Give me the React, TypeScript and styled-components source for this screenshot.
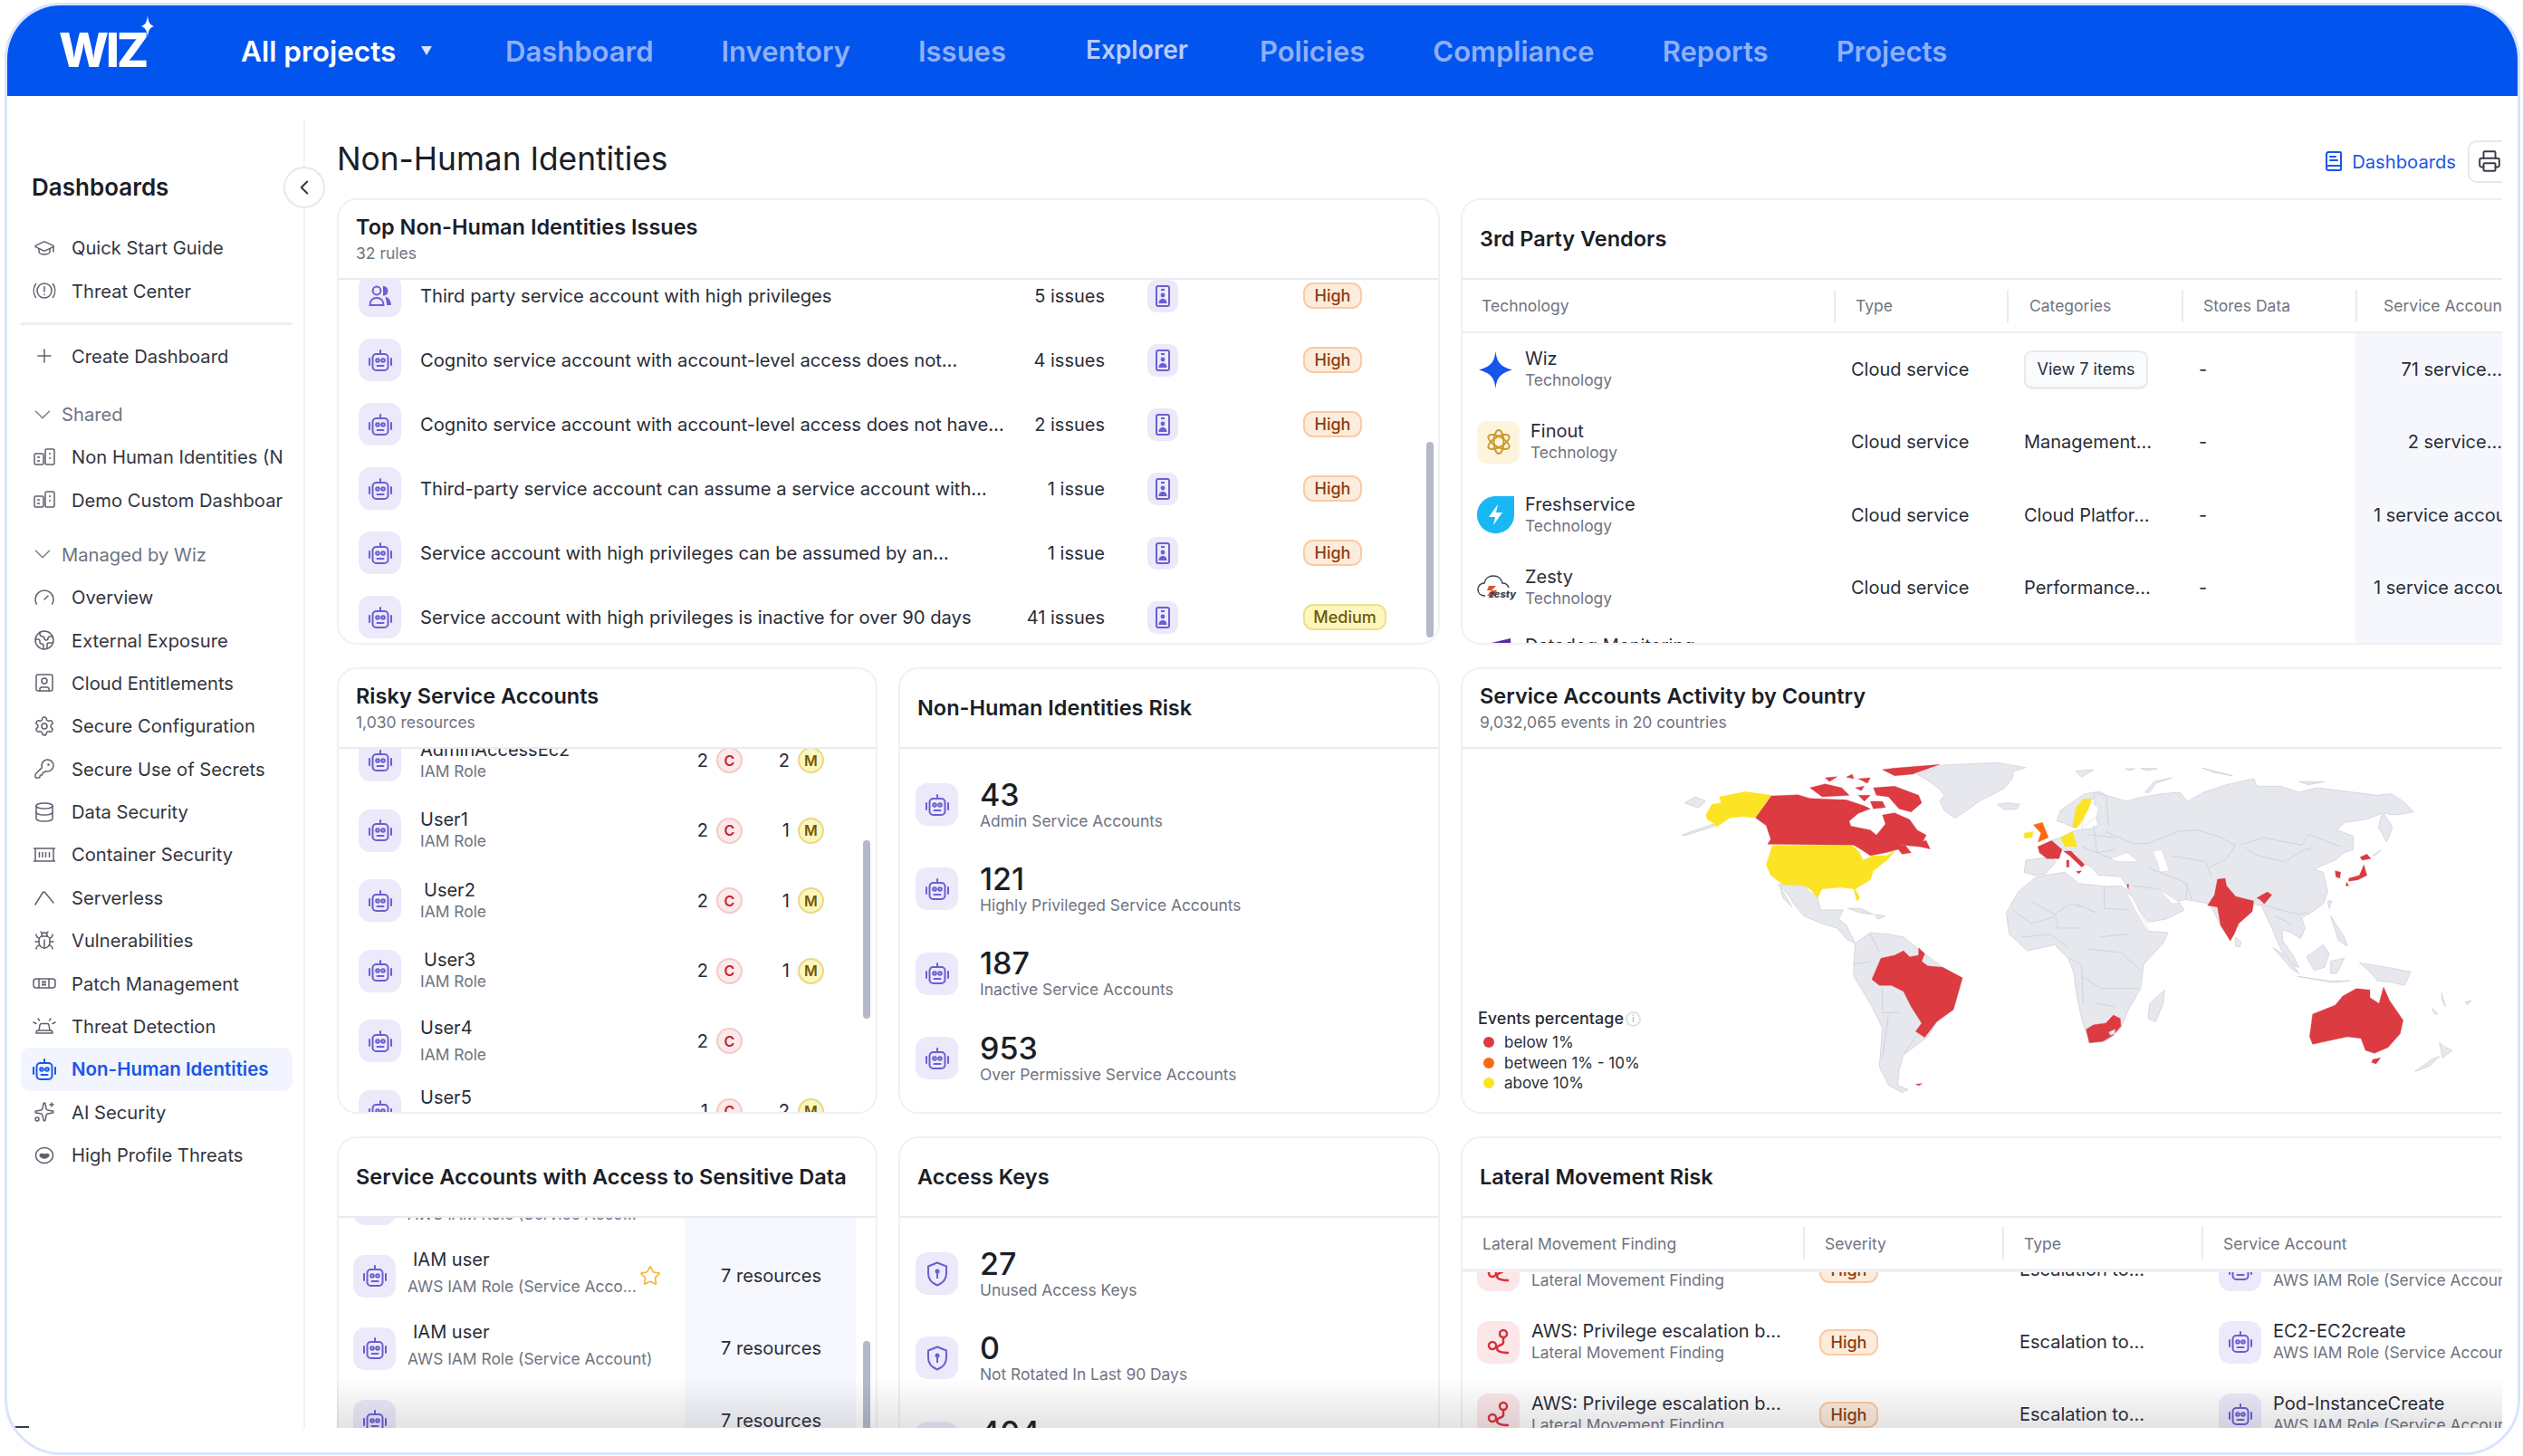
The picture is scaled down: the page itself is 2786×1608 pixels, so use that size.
import styled, { createGlobalStyle } from "styled-components";
import {
  BookText,
  Bug,
  ChevronDown,
  ChevronLeft,
  Database,
  Earth,
  Gauge,
  GraduationCap,
  KeyRound,
  Plus,
  Printer,
  Settings,
  Sparkles,
  SquareUser,
  Star,
} from "lucide-react";
import type { ReactNode } from "react";

const GlobalStyle = createGlobalStyle`
  html, body {
    margin: 0;
    background: #fff;
    font-family: Inter, "Noto Sans", sans-serif;
    color: #2a2d37;
  }
  * { box-sizing: border-box; }
`;

const Frame = styled.div`
  position: relative;
  width: 2778px;
  height: 1604px;
  margin: 3px 3px 0 5px;
  border: 3px solid #d9e4fc;
  border-radius: 62px;
  overflow: hidden;
  background: #fff;
`;

const Nav = styled.header`
  height: 100px;
  background: #0254ee;
  display: flex;
  align-items: center;
  padding-left: 57px;
`;

const Logo = styled.div`
  position: relative;
  width: 201px;
  font-size: 52px;
  font-weight: 800;
  letter-spacing: -3px;
  color: #fff;
  line-height: 1;
  & svg {
    position: absolute;
    left: 91px;
    top: -13px;
  }
`;

const ProjectPicker = styled.div`
  display: flex;
  align-items: center;
  width: 292px;
  font-size: 31.5px;
  font-weight: 600;
  color: #fff;
  & i {
    width: 0;
    height: 0;
    margin-left: 28px;
    border-left: 6px solid transparent;
    border-right: 6px solid transparent;
    border-top: 10px solid #d8e3fc;
  }
`;

const NavLinks = styled.nav`
  display: flex;
  align-items: center;
  gap: 75px;
  padding-top: 1px;
`;

const NavLink = styled.span<{ $current?: boolean }>`
  font-size: ${(p) => (p.$current ? 28 : 31)}px;
  font-weight: 600;
  color: ${(p) => (p.$current ? "#b9cdfb" : "#8fb0f8")};
  margin: ${(p) => (p.$current ? "-4px 4px 0 13px" : "0")};
`;

const Body = styled.div`
  display: flex;
  height: 1471px;
  padding-top: 26px;
`;

const Sidebar = styled.aside`
  position: relative;
  flex: none;
  width: 329px;
  border-right: 2px solid #f1f2f5;
  padding: 58px 0 0 15px;
`;

const SideTitle = styled.h2`
  margin: 0 0 26px 12px;
  font-size: 26px;
  line-height: 34px;
  font-weight: 600;
  color: #1b1e27;
`;

const CollapseButton = styled.button`
  position: absolute;
  right: -24px;
  top: 52px;
  width: 46px;
  height: 46px;
  border-radius: 50%;
  border: 2px solid #e6e8ec;
  background: #fff;
  display: flex;
  align-items: center;
  justify-content: center;
  padding: 0;
  color: #33363f;
  z-index: 2;
`;

const SideRule = styled.div`
  width: 300px;
  height: 3px;
  margin: 11px 0;
  background: #eceef2;
`;

const SideItem = styled.div<{ $active?: boolean }>`
  display: flex;
  align-items: center;
  width: 300px;
  height: 47.4px;
  padding-left: 13px;
  gap: 17px;
  border-radius: 10px;
  font-size: ${(p) => (p.$active ? 20.5 : 20.2)}px;
  font-weight: ${(p) => (p.$active ? 600 : 400)};
  white-space: nowrap;
  color: ${(p) => (p.$active ? "#1a56e8" : "#33363f")};
  background: ${(p) => (p.$active ? "#f2f5fd" : "transparent")};
  & > svg {
    flex: none;
    width: 26px;
    height: 24px;
    color: ${(p) => (p.$active ? "#1a56e8" : "#5d616d")};
  }
`;

const SideLabel = styled.span`
  width: 233px;
  overflow: hidden;
`;

const SideGroup = styled.div<{ $gap: number }>`
  display: flex;
  align-items: center;
  height: 47px;
  margin-top: ${(p) => p.$gap}px;
  padding-left: 9px;
  gap: 6px;
  font-size: 20.2px;
  color: #6f7480;
  & > svg {
    width: 30px;
    height: 30px;
    color: #7a7f8b;
  }
`;

const StrayMark = styled.i`
  position: absolute;
  left: 7px;
  bottom: 0;
  width: 17px;
  height: 2px;
  background: #3a3d46;
`;

const Main = styled.main`
  position: relative;
  flex: none;
  width: 2426px;
  height: 1445px;
  padding-left: 35px;
  overflow: hidden;
`;

const PageHeader = styled.div`
  display: flex;
  justify-content: space-between;
  align-items: center;
  height: 87px;
`;

const PageTitle = styled.h1`
  margin: 0;
  font-size: 35.3px;
  font-weight: 400;
  color: #1b1e27;
`;

const PageActions = styled.div`
  display: flex;
  align-items: center;
  gap: 13px;
  margin: 5px -9px 0 0;
  font-size: 20.2px;
  color: #1a56e8;
`;

const DashboardsLink = styled.span`
  display: flex;
  align-items: center;
  gap: 8px;
`;

const PrintButton = styled.button`
  width: 47px;
  height: 47px;
  border: 2px solid #e6e8ec;
  border-radius: 10px;
  background: #fff;
  display: flex;
  align-items: center;
  justify-content: center;
  padding: 0;
  color: #3a3d46;
`;

const Grid = styled.div`
  display: grid;
  grid-template-columns: 597px 598px 1180px;
  grid-template-rows: 493px 493px 400px;
  column-gap: 23px;
  row-gap: 25px;
`;

const Card = styled.section<{ $wide?: boolean }>`
  grid-column: ${(p) => (p.$wide ? "span 2" : "auto")};
  display: flex;
  flex-direction: column;
  border: 2px solid #f0f1f5;
  border-radius: 22px;
  background: #fff;
  overflow: hidden;
  min-width: 0;
`;

const CardHead = styled.div`
  flex: none;
  height: 88px;
  padding-left: 19px;
  display: flex;
  flex-direction: column;
  justify-content: center;
  gap: 2px;
  padding-bottom: 1px;
  border-bottom: 2px solid #e9ebf0;
`;

const CardTitle = styled.h3`
  margin: 0;
  font-size: 23.5px;
  line-height: 30px;
  font-weight: 600;
  color: #1b1e27;
`;

const CardSub = styled.div`
  font-size: 17.5px;
  line-height: 24px;
  color: #70747f;
`;

const CardBody = styled.div`
  position: relative;
  flex: 1;
  overflow: hidden;
`;

const Scrollbar = styled.i<{ $top: number; $height: number; $right: number }>`
  position: absolute;
  top: ${(p) => p.$top}px;
  right: ${(p) => p.$right}px;
  width: 8px;
  height: ${(p) => p.$height}px;
  border-radius: 4px;
  background: #b4b8c8;
`;

const Tile = styled.span<{ $red?: boolean }>`
  flex: none;
  width: 47px;
  height: 47px;
  border-radius: 13px;
  display: flex;
  align-items: center;
  justify-content: center;
  background: ${(p) => (p.$red ? "#fbe6e8" : "#ece9fb")};
  color: ${(p) => (p.$red ? "#d8323c" : "#6a5fd0")};
`;

const SmallTile = styled.span`
  flex: none;
  width: 34px;
  height: 36px;
  border-radius: 10px;
  display: flex;
  align-items: center;
  justify-content: center;
  background: #ece9fb;
  color: #6a5fd0;
`;

const Badge = styled.span<{ $medium?: boolean }>`
  flex: none;
  display: inline-flex;
  align-items: center;
  justify-content: center;
  width: ${(p) => (p.$medium ? 92 : 65)}px;
  height: 29px;
  border-radius: 11px;
  font-size: 18px;
  font-weight: 500;
  border: 2px solid ${(p) => (p.$medium ? "#ece08f" : "#f8cba5")};
  background: ${(p) => (p.$medium ? "#fdf7bd" : "#fdecdb")};
  color: ${(p) => (p.$medium ? "#6b5a10" : "#8a3d12")};
`;

const IssueList = styled.div`
  margin-top: -18px;
`;

const IssueRow = styled.div`
  display: flex;
  align-items: center;
  height: 71px;
  padding-left: 22px;
`;

const IssueName = styled.div`
  flex: none;
  width: 650px;
  margin-left: 21px;
  font-size: 20.2px;
  white-space: nowrap;
`;

const IssueCount = styled.div`
  flex: none;
  width: 106px;
  font-size: 20px;
  text-align: right;
  margin-right: 47px;
  white-space: nowrap;
`;

const IssueTag = styled.div`
  margin-left: 138px;
`;

const Table = styled.div`
  flex: 1;
  min-height: 0;
  display: flex;
  flex-direction: column;
  overflow: hidden;
`;

const TableHead = styled.div<{ $cols: string; $height: number; $strong?: boolean }>`
  flex: none;
  display: grid;
  grid-template-columns: ${(p) => p.$cols};
  align-items: center;
  height: ${(p) => p.$height}px;
  border-bottom: ${(p) => (p.$strong ? "4px solid #eef0f4" : "2px solid #eceef2")};
  background: #fff;
  position: relative;
  z-index: 1;
`;

const HeadCell = styled.div<{ $pad: number }>`
  height: 36px;
  display: flex;
  align-items: center;
  padding-left: ${(p) => p.$pad}px;
  font-size: 17.5px;
  color: #70747f;
  white-space: nowrap;
  overflow: hidden;
  &:not(:first-child) {
    border-left: 2px solid #e9ebf0;
  }
`;

const VendorRows = styled.div`
  flex: 1;
  background: linear-gradient(to right, transparent 986px, #f5f7fc 986px);
  & > div:last-child {
    margin-top: -4px;
  }
`;

const DataRow = styled.div<{ $cols: string; $height: number }>`
  display: grid;
  grid-template-columns: ${(p) => p.$cols};
  height: ${(p) => p.$height}px;
  align-items: center;
  font-size: 20px;
  white-space: nowrap;
`;

const Cell = styled.div<{ $pad: number }>`
  padding-left: ${(p) => p.$pad}px;
  display: flex;
  align-items: center;
  min-width: 0;
`;

const AccountCell = styled.div<{ $start?: boolean }>`
  width: 162px;
  display: flex;
  justify-content: ${(p) => (p.$start ? "flex-start" : "flex-end")};
  padding-left: ${(p) => (p.$start ? 20 : 0)}px;
  overflow: hidden;
`;

const NameStack = styled.div<{ $indent?: number; $ml?: number; $gap?: number }>`
  display: flex;
  flex-direction: column;
  min-width: 0;
  margin-left: ${(p) => p.$ml ?? 0}px;
  gap: ${(p) => p.$gap ?? 0}px;
  line-height: 24px;
  white-space: nowrap;
  & b {
    font-weight: 400;
    font-size: 20px;
    min-height: 24px;
    color: #2a2d37;
    padding-left: ${(p) => p.$indent ?? 0}px;
  }
  & small {
    font-size: 17.4px;
    min-height: 24px;
    color: #70747f;
  }
`;

const LogoSlot = styled.span<{ $w: number }>`
  flex: none;
  width: ${(p) => p.$w}px;
  margin-right: 12px;
  display: flex;
  align-items: center;
  justify-content: center;
`;

const FinoutMark = styled.span`
  width: 47px;
  height: 47px;
  border-radius: 10px;
  background: #fdf4de;
  display: flex;
  align-items: center;
  justify-content: center;
`;

const ZestyMark = styled.span`
  position: relative;
  width: 41px;
  height: 30px;
  & em {
    position: absolute;
    right: -2px;
    bottom: 2px;
    font-size: 11px;
    font-style: italic;
    font-weight: 800;
    line-height: 1;
    color: #3b4150;
  }
`;

const ViewButton = styled.button`
  width: 137px;
  height: 43px;
  border: 2px solid #e8eaee;
  border-bottom-width: 3px;
  border-radius: 9px;
  background: #fafbfc;
  font: inherit;
  font-size: 18px;
  color: #2a2d37;
`;

const RiskList = styled.div`
  margin-top: -26px;
`;

const RiskRow = styled.div`
  display: flex;
  align-items: center;
  height: 77.5px;
  padding-left: 22px;
`;

const RiskName = styled.div`
  flex: none;
  width: 265px;
  margin-left: 21px;
`;

const CountPair = styled.div<{ $second?: boolean }>`
  flex: none;
  width: ${(p) => (p.$second ? 90 : 91)}px;
  display: flex;
  align-items: center;
  justify-content: flex-end;
  gap: 9px;
  font-size: 20px;
`;

const Dot = styled.span<{ $m?: boolean }>`
  width: 29px;
  height: 29px;
  border-radius: 50%;
  display: flex;
  align-items: center;
  justify-content: center;
  font-size: 16px;
  font-weight: 600;
  border: 2px solid ${(p) => (p.$m ? "#e8d98a" : "#f6c9c9")};
  background: ${(p) => (p.$m ? "#fdf6b9" : "#fce9e9")};
  color: ${(p) => (p.$m ? "#6b5a10" : "#c0272d")};
`;

const StatList = styled.div`
  padding: 15px 0 0 17px;
`;

const StatRow = styled.div`
  display: flex;
  align-items: center;
  height: 93.3px;
  gap: 24px;
`;

const StatText = styled.div`
  & strong {
    display: block;
    font-size: 34px;
    line-height: 38px;
    font-weight: 500;
    color: #1b1e27;
  }
  & span {
    display: block;
    margin-top: -2px;
    font-size: 17.4px;
    line-height: 24px;
    color: #70747f;
  }
`;

const MapArea = styled.div`
  position: relative;
  height: 100%;
  padding: 8px 0 0 237px;
`;

const Legend = styled.div`
  position: absolute;
  left: 17px;
  top: 287px;
  font-size: 17px;
  line-height: 22px;
  color: #2a2d37;
`;

const LegendTitle = styled.div`
  display: flex;
  align-items: center;
  gap: 2px;
  margin-bottom: 4px;
  font-size: 18px;
  font-weight: 500;
`;

const LegendInfo = styled.i`
  width: 17px;
  height: 17px;
  border-radius: 50%;
  border: 2px solid #dfe1e7;
  font-size: 11px;
  font-style: normal;
  line-height: 13px;
  text-align: center;
  color: #b4b8c2;
`;

const LegendRow = styled.div<{ $color: string }>`
  display: flex;
  align-items: center;
  gap: 11px;
  height: 22.5px;
  padding-left: 6px;
  &::before {
    content: "";
    width: 12px;
    height: 12px;
    border-radius: 50%;
    background: ${(p) => p.$color};
  }
`;

const SensitiveList = styled.div`
  margin-top: -56px;
  background: linear-gradient(
    to right,
    transparent 382px,
    #f6f8fd 382px,
    #f6f8fd 571px,
    transparent 571px
  );
`;

const SensitiveRow = styled.div`
  display: flex;
  align-items: center;
  height: 80px;
  padding-left: 16px;
`;

const SensitiveName = styled.div`
  flex: none;
  width: 256px;
  margin-left: 13px;
  margin-top: -6px;
`;

const StarSlot = styled.span`
  flex: none;
  width: 24px;
  display: flex;
  color: #f5b942;
`;

const Resources = styled.span`
  margin-left: 66px;
  font-size: 20px;
`;

const LateralRows = styled.div`
  margin-top: -43px;
`;

const BottomFade = styled.div`
  position: absolute;
  left: 35px;
  right: 0;
  bottom: 0;
  height: 56px;
  background: linear-gradient(to bottom, rgba(40, 40, 50, 0), rgba(40, 40, 50, 0.13));
  pointer-events: none;
  z-index: 3;
`;

const RobotIcon = () => (
  <svg width="26" height="24" viewBox="0 0 26 24" fill="none" stroke="currentColor" strokeWidth="2" strokeLinecap="round">
    <path d="M13 1v4" />
    <rect x="4.5" y="5" width="17" height="18" rx="4" />
    <circle cx="10" cy="12" r="1.8" />
    <circle cx="16" cy="12" r="1.8" />
    <path d="M9.5 18h7" />
    <path d="M1 10v7M25 10v7" />
  </svg>
);

const PeopleIcon = () => (
  <svg width="26" height="24" viewBox="0 0 26 24" fill="none" stroke="currentColor" strokeWidth="2">
    <circle cx="9" cy="6" r="4.4" />
    <path d="M17 2a4.3 4.3 0 0 1 0 8.4z" fill="currentColor" />
    <path d="M1.5 22c0-5 3-8 7.5-8s7.5 3 7.5 8z" />
    <path d="M18.5 13c4 .6 6 4 6.5 9h-5c0-3-.7-6-1.5-9z" fill="currentColor" stroke="none" />
  </svg>
);

const BadgeIcon = () => (
  <svg width="16" height="24" viewBox="0 0 16 24" fill="none" stroke="currentColor" strokeWidth="2">
    <rect x="1" y="1" width="14" height="22" rx="2" />
    <path d="M6 5h4" />
    <circle cx="8" cy="11" r="2.4" fill="currentColor" stroke="none" />
    <path d="M3.5 20c0-3.5 2-5 4.500-5s4.500 1.500 4.500 5z" fill="currentColor" stroke="none" />
  </svg>
);

const ShieldIcon = () => (
  <svg width="24" height="28" viewBox="0 0 24 28" fill="none" stroke="currentColor" strokeWidth="2" strokeLinejoin="round">
    <path d="M12 1.500 22 5.500v8c0 6-4 10.500-10 13-6-2.500-10-7-10-13v-8z" />
    <circle cx="12" cy="11" r="2.500" fill="currentColor" stroke="none" />
    <path d="M12 12v7" />
  </svg>
);

const RouteIcon = () => (
  <svg width="26" height="30" viewBox="0 0 26 30" fill="none" stroke="currentColor" strokeWidth="2.500" strokeLinecap="round">
    <circle cx="18" cy="6" r="4" />
    <circle cx="6" cy="19" r="4" />
    <path d="M18 10v6c0 3-7 2-7 6 0 5 8 5 12 5" />
  </svg>
);

const ThreatCenterIcon = () => (
  <svg viewBox="0 0 26 24" fill="none" stroke="currentColor" strokeWidth="1.500" strokeLinecap="round">
    <circle cx="13" cy="12" r="8" />
    <path d="M13 7.500v5.500M13 16v.5" />
    <path d="M3.500 4.500c-3 4.500-3 10.500 0 15M22.500 4.500c3 4.500 3 10.500 0 15" />
  </svg>
);

const BoardIcon = () => (
  <svg viewBox="0 0 26 24" fill="none" stroke="currentColor" strokeWidth="1.500">
    <rect x="2" y="8" width="10" height="12" rx="1.500" />
    <rect x="14" y="3" width="10" height="17" rx="1.500" />
    <path d="M5 12h3M5 16h3M19 7v2M19 12v2" />
  </svg>
);

const ContainerIcon = () => (
  <svg viewBox="0 0 26 24" fill="none" stroke="currentColor" strokeWidth="1.500">
    <path d="M1 5h24M1 19h24M3 5v14M23 5v14M7.500 9v6M11 9v6M14.500 9v6M18.500 9v6" />
  </svg>
);

const LambdaIcon = () => (
  <svg viewBox="0 0 26 24" fill="none" stroke="currentColor" strokeWidth="1.500" strokeLinecap="round">
    <path d="M3 20 11 7c1-1.500 2-1.500 3 0l9 11" />
  </svg>
);

const PatchIcon = () => (
  <svg viewBox="0 0 26 24" fill="none" stroke="currentColor" strokeWidth="1.500">
    <rect x="1" y="7" width="24" height="10" rx="3" />
    <path d="M7 7v10M18 7v10" />
    <path d="M10 10.500h5M10 13.500h5" strokeWidth="2" />
  </svg>
);

const AlarmIcon = () => (
  <svg viewBox="0 0 26 24" fill="none" stroke="currentColor" strokeWidth="1.500" strokeLinecap="round">
    <path d="M7 16l1-6c.2-1 1-1.500 2-1.500h6c1 0 1.800.5 2 1.500l1 6" />
    <path d="M4 19c0-2 1-3 2-3h14c1 0 2 1 2 3z" />
    <path d="M1 7l3 1.500M25 7l-3 1.500M6 3l1.500 2M20 3l-1.500 2" />
  </svg>
);

const ProfileIcon = () => (
  <svg viewBox="0 0 26 24" fill="none" stroke="currentColor" strokeWidth="1.500">
    <ellipse cx="13" cy="12" rx="9.500" ry="8.500" />
    <path d="M8 12c2 4 8 4 10 0-1-3-3-1-5-1s-4-2-5 1z" fill="currentColor" />
  </svg>
);

const WizSpark = ({ size = 41, color = "#1654ec" }: { size?: number; color?: string }) => (
  <svg width={size} height={size} viewBox="0 0 40 40">
    <path d="M20 0c1.500 11 4 16 18 20-14 4-16.500 9-18 20-1.500-11-4-16-18-20 14-4 16.500-9 18-20z" fill={color} />
  </svg>
);

const FinoutIcon = () => (
  <svg width="26" height="30" viewBox="0 0 26 30" fill="none" stroke="#c99a2e" strokeWidth="2">
    <ellipse cx="13" cy="15" rx="5.500" ry="13" />
    <ellipse cx="13" cy="15" rx="5.500" ry="13" transform="rotate(60 13 15)" />
    <ellipse cx="13" cy="15" rx="5.500" ry="13" transform="rotate(120 13 15)" />
  </svg>
);

const FreshIcon = () => (
  <svg width="41" height="41" viewBox="0 0 41 41">
    <path d="M20.500 0H41v20.500C41 32 32 41 20.500 41S0 32 0 20.500 9 0 20.500 0z" fill="#19b8f5" />
    <path d="M23 9 13 23h7l-2 9 10-14h-7z" fill="#fff" />
  </svg>
);

const ZestyCloud = () => (
  <svg width="36" height="28" viewBox="0 0 36 28" fill="none" stroke="#3b4150" strokeWidth="1.500">
    <path d="M9 24c-5 0-8-3-8-7s3-7 7-7c1-5 5-8 10-8s9 3 10 8c3 0 6 2 7 5" />
    <path d="M13 13h8l-5 5h6l-2 6h-9l5-6h-5z" fill="#e2502a" stroke="none" />
  </svg>
);

const DatadogMark = () => (
  <svg width="36" height="40" viewBox="0 0 36 40">
    <path d="M0 8 34 0l2 34-30 6z" fill="#5b2d9e" />
  </svg>
);

const LAND = "#e7e8ed";
const LINE = "#d0d3dd";
const RED = "#dc3b42";
const YELLOW = "#fce324";
const ORANGE = "#fb6a12";

const east = (pts: string) =>
  pts
    .split(" ")
    .map((p) => {
      const [x, y] = p.split(",");
      return `${Number(x) + 1320},${y}`;
    })
    .join(" ");

const eurasia =
  east(
    "60,120 100,130 170,150 200,140 285,125 345,120 370,150 425,120 500,95 590,75 600,100 680,100 740,120 800,105 920,120 1000,130 1045,125 1085,150 1120,185 1060,195 1020,190 1050,235 1030,285 1003,235 1015,190 960,210 890,220 865,245 920,265 920,310 890,320 860,345 810,365 790,375 820,385 835,450 820,490 770,525 745,525 760,570 745,605 715,585 685,575 685,610 720,660 740,700 710,690 680,640 650,570 615,495 590,490 585,510 530,560 515,610 480,560 445,490 365,475 340,480 360,510 300,540 240,550 190,480 170,430 150,400 90,395 75,395 55,370 20,350 0,320"
  ) + " 1305,315 1275,310 1240,280 1270,270 1310,250 1330,245 1370,240 1395,230 1385,190 1380,120";

const landPolys = [
  // greenland, iceland
  "795,60 880,30 1060,22 1155,38 1115,50 1110,75 1085,105 1040,130 1000,150 960,180 920,205 885,180 870,150 885,130 870,110 830,80",
  "1060,160 1095,155 1135,160 1125,175 1085,178",
  "25,155 60,135 95,150 70,172",
  "15,262 120,225 125,232 30,262",
  // central america
  "335,425 415,430 465,470 475,510 520,510 550,510 535,540 560,560 590,620 565,610 530,570 480,555 420,530 395,500 360,450",
  "340,430 380,500 350,470",
  "565,505 610,505 650,525 610,520",
  "655,525 690,530 665,540",
  // south america
  "590,620 640,585 700,590 750,600 800,640 880,700 945,735 915,840 860,880 830,930 790,960 750,990 735,1040 730,1090 765,1105 745,1115 700,1090 670,1030 680,900 640,820 585,730 585,690",
  // africa
  "1090,520 1130,450 1190,400 1285,385 1330,422 1420,432 1470,430 1490,445 1525,510 1560,580 1625,585 1610,620 1545,690 1535,770 1495,840 1470,900 1420,945 1370,950 1350,905 1335,850 1320,770 1315,720 1295,670 1250,625 1160,645 1100,590",
  east("295,775 290,820 265,880 240,870 245,820"),
  // europe bits
  "1155,345 1235,335 1255,350 1220,390 1185,395 1150,385",
  "1258,215 1270,180 1350,125 1400,118 1430,135 1375,142 1322,170 1310,235 1280,222",
  eurasia,
  // islands east
  east("530,600 548,615 545,632 530,630"),
  east("985,328 1012,312 990,330"),
  east("655,635 700,665 740,720 715,705"),
  east("735,730 840,745 910,745 850,750"),
  east("765,665 820,625 840,655 825,700 790,710"),
  east("845,680 890,670 865,720 845,720"),
  east("940,685 1000,695 1060,705 1110,715 1090,760 1050,750 1000,745 975,715"),
  east("845,530 890,600 900,630 870,610"),
  east("835,480 848,480 840,505"),
  east("750,520 765,520 755,535"),
  east("1125,1045 1180,1005 1205,995 1175,1025"),
  east("1205,950 1225,965 1248,975 1215,1000"),
  east("1212,785 1225,830 1215,810"),
  east("1180,835 1200,855 1190,855"),
  east("1290,815 1310,810 1298,825"),
  east("230,120 260,85 320,72 265,90 245,120"),
  east("0,50 60,45 20,70"),
  east("165,42 195,42 180,48"),
  east("215,40 270,42 235,48"),
  east("740,85 825,85 770,95"),
  east("420,40 520,65 460,55"),
];

const waterPolys = [
  east("115,340 170,320 210,350 140,350"),
  east("255,315 285,310 310,380 280,385 270,350"),
  east("165,445 190,470 240,570 235,575 200,515"),
  east("275,440 345,485 320,490"),
  east("45,150 75,170 70,200 20,240 30,190"),
];

const borderLines = [
  east("240,290 340,250 400,245 470,265 530,295"),
  east("545,295 620,270 750,295 770,260 850,290 880,300"),
  east("560,300 590,325 690,350 760,310 780,305"),
  east("530,295 500,340 440,370"),
  east("240,370 365,420 385,475"),
  east("190,430 270,440"),
  east("100,250 190,290 240,290"),
  east("60,230 70,320 130,310"),
  east("20,300 120,340"),
  east("40,260 130,270"),
  east("100,130 110,230"),
  east("320,330 430,350 450,400"),
  east("370,420 365,470"),
  east("610,490 680,510 745,525"),
  east("660,530 720,560"),
  east("95,430 95,505 180,510"),
  east("0,490 70,520"),
  east("80,600 170,590"),
  east("45,640 140,650"),
  east("150,650 215,710"),
  east("20,730 85,770 210,770"),
  east("70,820 130,830"),
  "1170,480 1250,525 1300,490 1345,500",
  "1110,510 1175,555 1255,530 1260,570 1340,570",
  "1140,600 1240,590 1300,640",
  "1300,670 1340,690 1345,820",
  "640,590 670,650",
  "585,690 640,680",
  "680,770 680,850 740,850",
  "700,855 680,1000",
  "750,990 790,930",
];

const countryPolys: { color: string; pts: string }[] = [
  { color: YELLOW, pts: "95,195 115,160 145,155 140,135 225,118 312,130 260,205 215,200 175,205 130,235 120,222 100,210" },
  { color: RED, pts: "312,132 400,128 440,140 560,145 620,165 640,175 600,190 570,215 575,232 640,245 660,262 690,225 680,195 720,188 770,210 795,245 825,262 810,290 835,305 800,300 745,295 730,310 690,320 640,330 610,310 585,295 300,292 310,275 295,230 260,205" },
  { color: RED, pts: "440,105 490,92 545,105 570,130 480,135" },
  { color: RED, pts: "490,72 530,68 505,85" },
  { color: RED, pts: "560,70 580,60 585,75" },
  { color: RED, pts: "600,75 640,72 630,90" },
  { color: RED, pts: "680,45 720,40 870,28 780,60 720,65" },
  { color: RED, pts: "650,105 720,100 800,130 810,155 775,185 735,175 700,135 660,130" },
  { color: RED, pts: "590,105 620,100 610,115" },
  { color: RED, pts: "600,130 640,130 620,150" },
  { color: RED, pts: "640,150 680,150 690,170 650,175" },
  { color: RED, pts: "800,285 825,280 838,308 810,300" },
  { color: RED, pts: "725,300 755,295 775,320 745,325" },
  { color: YELLOW, pts: "315,296 580,296 605,320 615,345 650,330 695,330 725,310 695,345 650,380 640,410 590,440 605,470 595,480 585,440 540,435 480,440 465,470 440,440 415,428 350,425 310,395 295,360" },
  { color: RED, pts: "675,670 720,660 750,645 770,665 800,660 800,635 820,655 810,680 830,695 880,700 945,735 915,840 860,880 820,932 790,912 810,885 775,830 750,780 710,760 670,760 645,740" },
  { color: RED, pts: "790,1087 812,1085 800,1092" },
  { color: YELLOW, pts: "1310,235 1322,170 1345,142 1375,142 1360,180 1335,225 1320,240" },
  { color: RED, pts: "1195,300 1240,280 1275,310 1265,340 1225,340 1200,320" },
  { color: YELLOW, pts: "1270,270 1310,250 1325,300 1285,300" },
  { color: ORANGE, pts: "1180,228 1210,220 1230,270 1195,285 1205,255" },
  { color: YELLOW, pts: "1150,255 1180,250 1175,270 1150,272" },
  { color: RED, pts: "1280,315 1305,315 1350,360 1340,368 1300,330" },
  { color: RED, pts: "1322,382 1340,380 1330,390" },
  { color: RED, pts: "1290,345 1298,345 1298,368 1290,368" },
  { color: RED, pts: east("35,905 60,890 100,885 125,858 148,870 150,895 125,925 90,945 45,950") },
  { color: LAND, pts: east("110,915 130,905 130,920 115,925") },
  { color: RED, pts: east("470,408 495,405 500,430 530,465 590,480 585,515 540,555 525,590 512,612 480,560 470,500 437,495 460,460") },
  { color: RED, pts: east("600,470 635,450 650,460 625,490 610,475") },
  { color: RED, pts: east("942,335 965,325 978,340 950,345") },
  { color: RED, pts: east("905,405 940,395 955,360 965,395 935,410 905,415") },
  { color: RED, pts: east("898,418 905,430 895,430") },
  { color: RED, pts: east("860,380 878,385 875,405 862,400") },
  { color: RED, pts: east("170,425 176,425 174,440") },
  { color: RED, pts: east("785,855 860,825 885,795 930,770 975,775 975,800 1005,820 1020,765 1040,810 1085,875 1075,920 1035,965 990,985 960,975 945,935 900,930 830,945 785,955 775,930") },
  { color: RED, pts: east("985,1005 1010,1000 995,1020 980,1015") },
];

const WorldMap = () => (
  <svg width="890" height="380" viewBox="0 0 2670 1140">
    {landPolys.map((pts) => (
      <polygon key={pts} points={pts} fill={LAND} stroke={LINE} strokeWidth="2.500" />
    ))}
    {waterPolys.map((pts) => (
      <polygon key={pts} points={pts} fill="#fff" stroke={LINE} strokeWidth="1.500" />
    ))}
    {borderLines.map((pts) => (
      <polyline key={pts} points={pts} fill="none" stroke={LINE} strokeWidth="3" />
    ))}
    {countryPolys.map((c) => (
      <polygon key={c.pts} points={c.pts} fill={c.color} stroke={c.color} strokeWidth="1" />
    ))}
  </svg>
);

const topNav = ["Dashboard", "Inventory", "Issues", "Explorer", "Policies", "Compliance", "Reports", "Projects"];

const managedItems: { label: string; icon: ReactNode; active?: boolean }[] = [
  { label: "Overview", icon: <Gauge strokeWidth={1.5} /> },
  { label: "External Exposure", icon: <Earth strokeWidth={1.5} /> },
  { label: "Cloud Entitlements", icon: <SquareUser strokeWidth={1.5} /> },
  { label: "Secure Configuration", icon: <Settings strokeWidth={1.5} /> },
  { label: "Secure Use of Secrets", icon: <KeyRound strokeWidth={1.5} /> },
  { label: "Data Security", icon: <Database strokeWidth={1.5} /> },
  { label: "Container Security", icon: <ContainerIcon /> },
  { label: "Serverless", icon: <LambdaIcon /> },
  { label: "Vulnerabilities", icon: <Bug strokeWidth={1.5} /> },
  { label: "Patch Management", icon: <PatchIcon /> },
  { label: "Threat Detection", icon: <AlarmIcon /> },
  { label: "Non-Human Identities", icon: <RobotIcon />, active: true },
  { label: "AI Security", icon: <Sparkles strokeWidth={1.5} /> },
  { label: "High Profile Threats", icon: <ProfileIcon /> },
];

const issues = [
  { name: "Third party service account with high privileges", count: "5 issues", people: true },
  { name: "Cognito service account with account-level access does not…", count: "4 issues" },
  { name: "Cognito service account with account-level access does not have…", count: "2 issues" },
  { name: "Third-party service account can assume a service account with…", count: "1 issue" },
  { name: "Service account with high privileges can be assumed by an…", count: "1 issue" },
  { name: "Service account with high privileges is inactive for over 90 days", count: "41 issues", medium: true },
];

const vendorCols = "410px 191px 193px 192px 1fr";

const vendors: { name: string; logo: ReactNode; w: number; category: ReactNode; account: string; start?: boolean }[] = [
  { name: "Wiz", logo: <WizSpark />, w: 41, category: <ViewButton>View 7 items</ViewButton>, account: "71 service…" },
  { name: "Finout", logo: <FinoutMark><FinoutIcon /></FinoutMark>, w: 47, category: "Management…", account: "2 service…" },
  { name: "Freshservice", logo: <FreshIcon />, w: 41, category: "Cloud Platfor…", account: "1 service account", start: true },
  { name: "Zesty", logo: <ZestyMark><ZestyCloud /><em>zesty</em></ZestyMark>, w: 41, category: "Performance…", account: "1 service account", start: true },
  { name: "Datadog Monitoring", logo: <DatadogMark />, w: 41, category: "Monitoring…", account: "1 service account", start: true },
];

const risky = [
  { name: "AdminAccessEc2", c: 2, m: 2 },
  { name: "User1", c: 2, m: 1 },
  { name: "User2", c: 2, m: 1, indent: 4 },
  { name: "User3", c: 2, m: 1, indent: 4 },
  { name: "User4", c: 2, gap: 6 },
  { name: "User5", c: 1, m: 2, gap: 6 },
];

const lateralCols = "376px 220px 220px 1fr";

const lateral = [
  { finding: "AWS: Privilege escalation b…", account: "EC2-Lambda" },
  { finding: "AWS: Privilege escalation b…", account: "EC2-EC2create" },
  { finding: "AWS: Privilege escalation b…", account: "Pod-InstanceCreate" },
];

const sensitive = [
  { name: "IAM user", sub: "AWS IAM Role (Service Acco…" },
  { name: "IAM user", sub: "AWS IAM Role (Service Acco…", star: true },
  { name: "IAM user", sub: "AWS IAM Role (Service Account)" },
  { name: "", sub: "" },
];

const App = () => {
  return (
    <>
      <GlobalStyle />
      <Frame>
        <Nav>
          <Logo>
            WIZ
            <svg width="14" height="24" viewBox="0 0 14 24">
              <path d="M7 0c.8 7 2 10 7 12-5 2-6.200 5-7 12-.8-7-2-10-7-12 5-2 6.200-5 7-12z" fill="#fff" />
            </svg>
          </Logo>
          <ProjectPicker>
            All projects
            <i />
          </ProjectPicker>
          <NavLinks>
            {topNav.map((item) => (
              <NavLink key={item} $current={item === "Explorer"}>
                {item}
              </NavLink>
            ))}
          </NavLinks>
        </Nav>

        <Body>
          <Sidebar>
            <SideTitle>Dashboards</SideTitle>
            <CollapseButton>
              <ChevronLeft size={26} strokeWidth={1.8} />
            </CollapseButton>
            <SideItem><GraduationCap strokeWidth={1.5} /><SideLabel>Quick Start Guide</SideLabel></SideItem>
            <SideItem><ThreatCenterIcon /><SideLabel>Threat Center</SideLabel></SideItem>
            <SideRule />
            <SideItem><Plus strokeWidth={1.5} /><SideLabel>Create Dashboard</SideLabel></SideItem>
            <SideGroup $gap={17}><ChevronDown strokeWidth={1.2} />Shared</SideGroup>
            <SideItem><BoardIcon /><SideLabel>Non Human Identities (N</SideLabel></SideItem>
            <SideItem><BoardIcon /><SideLabel>Demo Custom Dashboard</SideLabel></SideItem>
            <SideGroup $gap={13}><ChevronDown strokeWidth={1.2} />Managed by Wiz</SideGroup>
            {managedItems.map((item) => (
              <SideItem key={item.label} $active={item.active}>
                {item.icon}
                <SideLabel>{item.label}</SideLabel>
              </SideItem>
            ))}
            <StrayMark />
          </Sidebar>

          <Main>
            <PageHeader>
              <PageTitle>Non-Human Identities</PageTitle>
              <PageActions>
                <DashboardsLink>
                  <BookText size={24} strokeWidth={2} />
                  Dashboards
                </DashboardsLink>
                <PrintButton>
                  <Printer size={26} strokeWidth={1.8} />
                </PrintButton>
              </PageActions>
            </PageHeader>

            <Grid>
              <Card $wide>
                <CardHead>
                  <CardTitle>Top Non-Human Identities Issues</CardTitle>
                  <CardSub>32 rules</CardSub>
                </CardHead>
                <CardBody>
                  <IssueList>
                    {issues.map((row) => (
                      <IssueRow key={row.name}>
                        <Tile>{row.people ? <PeopleIcon /> : <RobotIcon />}</Tile>
                        <IssueName>{row.name}</IssueName>
                        <IssueCount>{row.count}</IssueCount>
                        <SmallTile><BadgeIcon /></SmallTile>
                        <IssueTag>
                          <Badge $medium={row.medium}>{row.medium ? "Medium" : "High"}</Badge>
                        </IssueTag>
                      </IssueRow>
                    ))}
                  </IssueList>
                  <Scrollbar $top={179} $height={216} $right={5} />
                </CardBody>
              </Card>

              <Card>
                <CardHead>
                  <CardTitle>3rd Party Vendors</CardTitle>
                </CardHead>
                <Table>
                  <TableHead $cols={vendorCols} $height={59}>
                    <HeadCell $pad={21}>Technology</HeadCell>
                    <HeadCell $pad={22}>Type</HeadCell>
                    <HeadCell $pad={23}>Categories</HeadCell>
                    <HeadCell $pad={22}>Stores Data</HeadCell>
                    <HeadCell $pad={29}>Service Account</HeadCell>
                  </TableHead>
                  <VendorRows>
                    {vendors.map((v) => (
                      <DataRow key={v.name} $cols={vendorCols} $height={80.3}>
                        <Cell $pad={16}>
                          <LogoSlot $w={v.w}>{v.logo}</LogoSlot>
                          <NameStack>
                            <b>{v.name}</b>
                            <small>Technology</small>
                          </NameStack>
                        </Cell>
                        <Cell $pad={19}>Cloud service</Cell>
                        <Cell $pad={19}>{v.category}</Cell>
                        <Cell $pad={19}>-</Cell>
                        <AccountCell $start={v.start}>{v.account}</AccountCell>
                      </DataRow>
                    ))}
                  </VendorRows>
                </Table>
              </Card>

              <Card>
                <CardHead>
                  <CardTitle>Risky Service Accounts</CardTitle>
                  <CardSub>1,030 resources</CardSub>
                </CardHead>
                <CardBody>
                  <RiskList>
                    {risky.map((r) => (
                      <RiskRow key={r.name}>
                        <Tile><RobotIcon /></Tile>
                        <RiskName>
                          <NameStack $indent={r.indent} $gap={r.gap}>
                            <b>{r.name}</b>
                            <small>IAM Role</small>
                          </NameStack>
                        </RiskName>
                        <CountPair>{r.c}<Dot>C</Dot></CountPair>
                        {r.m && <CountPair $second>{r.m}<Dot $m>M</Dot></CountPair>}
                      </RiskRow>
                    ))}
                  </RiskList>
                  <Scrollbar $top={101} $height={197} $right={6} />
                </CardBody>
              </Card>

              <Card>
                <CardHead>
                  <CardTitle>Non-Human Identities Risk</CardTitle>
                </CardHead>
                <CardBody>
                  <StatList>
                    <StatRow>
                      <Tile><RobotIcon /></Tile>
                      <StatText><strong>43</strong><span>Admin Service Accounts</span></StatText>
                    </StatRow>
                    <StatRow>
                      <Tile><RobotIcon /></Tile>
                      <StatText><strong>121</strong><span>Highly Privileged Service Accounts</span></StatText>
                    </StatRow>
                    <StatRow>
                      <Tile><RobotIcon /></Tile>
                      <StatText><strong>187</strong><span>Inactive Service Accounts</span></StatText>
                    </StatRow>
                    <StatRow>
                      <Tile><RobotIcon /></Tile>
                      <StatText><strong>953</strong><span>Over Permissive Service Accounts</span></StatText>
                    </StatRow>
                  </StatList>
                </CardBody>
              </Card>

              <Card>
                <CardHead>
                  <CardTitle>Service Accounts Activity by Country</CardTitle>
                  <CardSub>9,032,065 events in 20 countries</CardSub>
                </CardHead>
                <CardBody>
                  <MapArea>
                    <WorldMap />
                    <Legend>
                      <LegendTitle>Events percentage<LegendInfo>i</LegendInfo></LegendTitle>
                      <LegendRow $color={RED}>below 1%</LegendRow>
                      <LegendRow $color={ORANGE}>between 1% - 10%</LegendRow>
                      <LegendRow $color={YELLOW}>above 10%</LegendRow>
                    </Legend>
                  </MapArea>
                </CardBody>
              </Card>

              <Card>
                <CardHead>
                  <CardTitle>Service Accounts with Access to Sensitive Data</CardTitle>
                </CardHead>
                <CardBody>
                  <SensitiveList>
                    {sensitive.map((s, i) => (
                      <SensitiveRow key={i}>
                        <Tile><RobotIcon /></Tile>
                        <SensitiveName>
                          <NameStack $indent={6} $gap={6}>
                            <b>{s.name}</b>
                            <small>{s.sub}</small>
                          </NameStack>
                        </SensitiveName>
                        <StarSlot>{s.star && <Star size={24} strokeWidth={1.8} />}</StarSlot>
                        <Resources>7 resources</Resources>
                      </SensitiveRow>
                    ))}
                  </SensitiveList>
                  <Scrollbar $top={136} $height={120} $right={6} />
                </CardBody>
              </Card>

              <Card>
                <CardHead>
                  <CardTitle>Access Keys</CardTitle>
                </CardHead>
                <CardBody>
                  <StatList>
                    <StatRow>
                      <Tile><ShieldIcon /></Tile>
                      <StatText><strong>27</strong><span>Unused Access Keys</span></StatText>
                    </StatRow>
                    <StatRow>
                      <Tile><ShieldIcon /></Tile>
                      <StatText><strong>0</strong><span>Not Rotated In Last 90 Days</span></StatText>
                    </StatRow>
                    <StatRow>
                      <Tile><ShieldIcon /></Tile>
                      <StatText><strong>404</strong><span>Not Used In Last 90 Days</span></StatText>
                    </StatRow>
                  </StatList>
                </CardBody>
              </Card>

              <Card>
                <CardHead>
                  <CardTitle>Lateral Movement Risk</CardTitle>
                </CardHead>
                <Table>
                  <TableHead $cols={lateralCols} $height={60} $strong>
                    <HeadCell $pad={22}>Lateral Movement Finding</HeadCell>
                    <HeadCell $pad={22}>Severity</HeadCell>
                    <HeadCell $pad={22}>Type</HeadCell>
                    <HeadCell $pad={22}>Service Account</HeadCell>
                  </TableHead>
                  <CardBody>
                    <LateralRows>
                      {lateral.map((row) => (
                        <DataRow key={row.account} $cols={lateralCols} $height={80}>
                          <Cell $pad={16}>
                            <Tile $red><RouteIcon /></Tile>
                            <NameStack $ml={13}>
                              <b>{row.finding}</b>
                              <small>Lateral Movement Finding</small>
                            </NameStack>
                          </Cell>
                          <Cell $pad={18}><Badge>High</Badge></Cell>
                          <Cell $pad={19}>Escalation to…</Cell>
                          <Cell $pad={19}>
                            <Tile><RobotIcon /></Tile>
                            <NameStack $ml={13}>
                              <b>{row.account}</b>
                              <small>AWS IAM Role (Service Account)</small>
                            </NameStack>
                          </Cell>
                        </DataRow>
                      ))}
                    </LateralRows>
                  </CardBody>
                </Table>
              </Card>
            </Grid>
            <BottomFade />
          </Main>
        </Body>
      </Frame>
    </>
  );
};

export default App;
